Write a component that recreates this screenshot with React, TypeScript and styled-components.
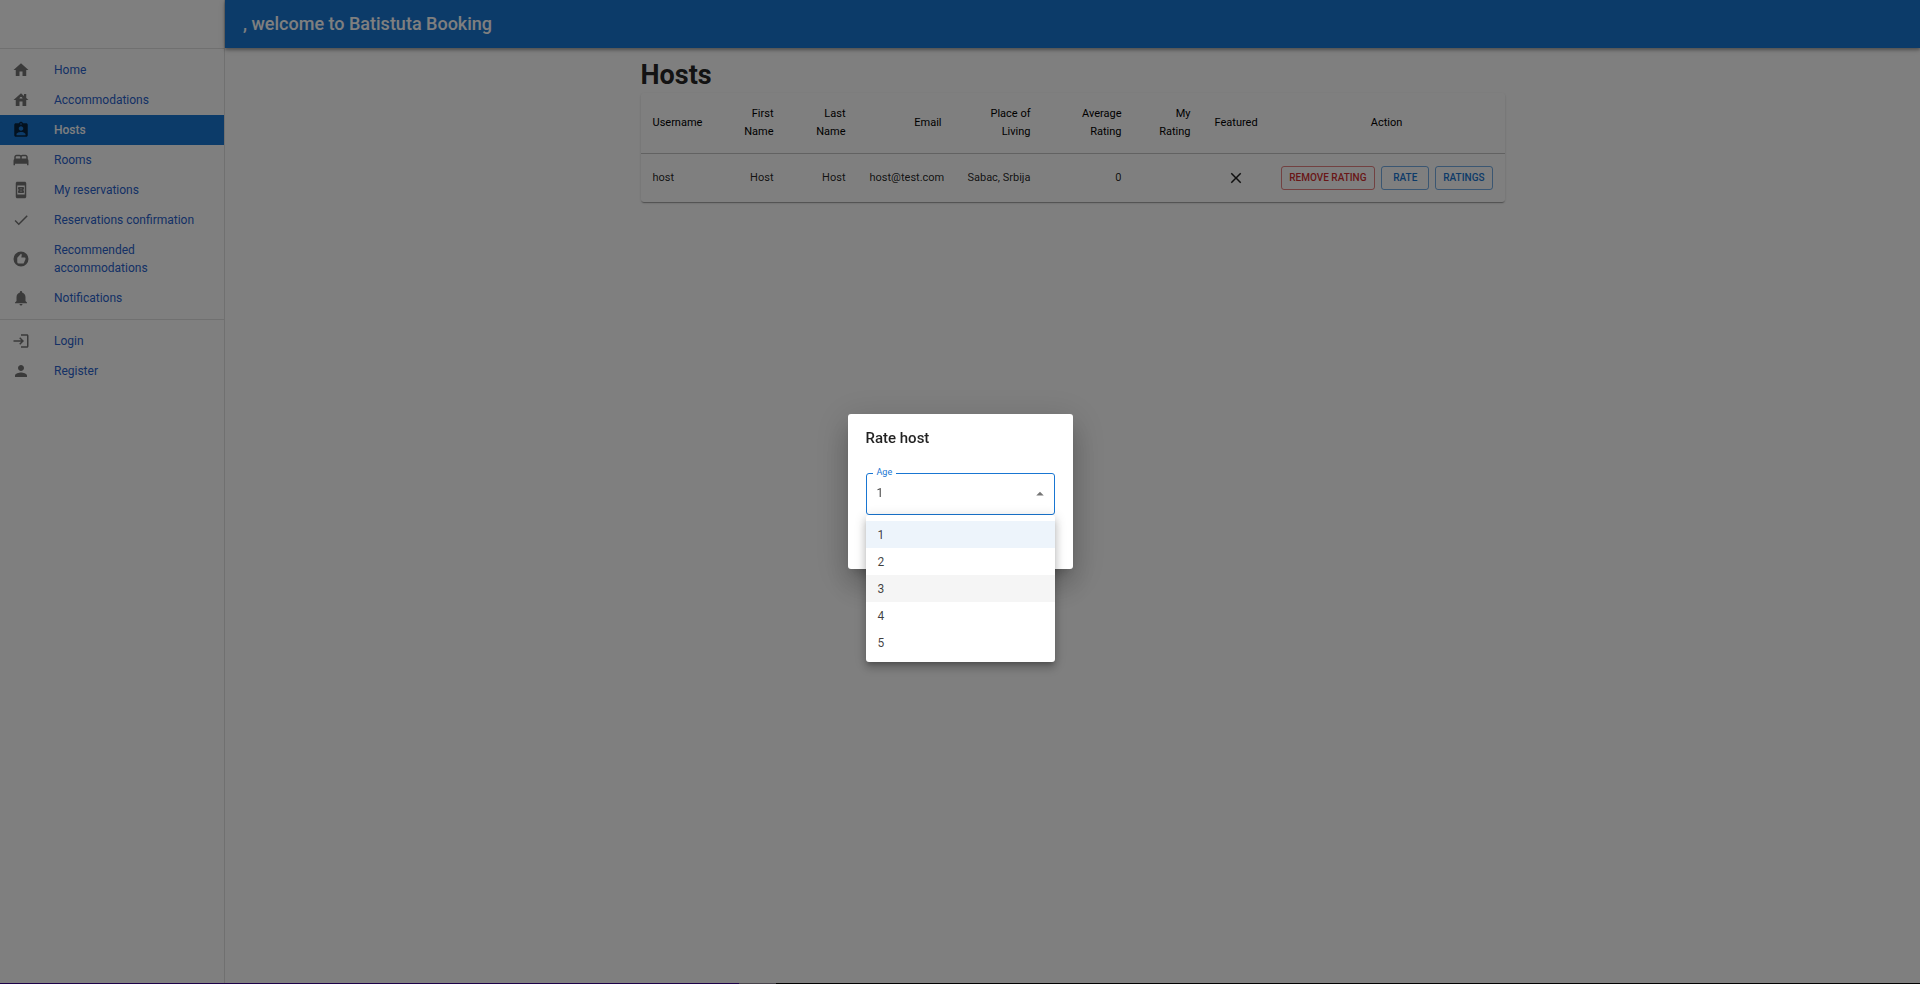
import React, { useState } from "react";
import styled, { createGlobalStyle } from "styled-components";
import {
  MdHome, MdHouse, MdAssignmentInd, MdBed, MdBookOnline, MdCheck, MdRecommend,
  MdNotifications, MdLogin, MdPerson, MdClose, MdArrowDropUp,
} from "react-icons/md";
import type { IconType } from "react-icons";

const GlobalStyle = createGlobalStyle`
  *, *::before, *::after { box-sizing: border-box; }
  body {
    margin: 0;
    background: #fff;
    color: rgba(0, 0, 0, 0.87);
    font-family: Roboto, "Liberation Sans", sans-serif;
    font-size: 12px;
    line-height: 18px;
  }
`;

const Shell = styled.div`
  display: grid;
  grid-template-columns: 225px 1fr;
  min-height: 100vh;
`;

const Sidebar = styled.aside`
  border-right: 1px solid rgba(0, 0, 0, 0.12);
`;

const SidebarTop = styled.div`
  height: 48px;
`;

const Divider = styled.hr`
  margin: 0;
  border: 0;
  border-top: 1px solid rgba(0, 0, 0, 0.12);
`;

const NavList = styled.ul`
  list-style: none;
  margin: 0;
  padding: 6px 0;
`;

const NavLink = styled.a<{ $active?: boolean }>`
  display: flex;
  align-items: center;
  padding: 6px 12px;
  text-decoration: none;
  color: ${(p) => (p.$active ? "#fff" : "#2a62cc")};
  background: ${(p) => (p.$active ? "#1976d2" : "transparent")};
  font-weight: ${(p) => (p.$active ? 500 : 400)};

  svg {
    flex: none;
    width: 18px;
    height: 18px;
    margin-right: 24px;
    color: ${(p) => (p.$active ? "rgba(0, 0, 0, 0.7)" : "rgba(0, 0, 0, 0.54)")};
  }
`;

const AppBar = styled.header`
  display: flex;
  align-items: center;
  height: 48px;
  padding: 0 18px;
  color: #fff;
  background: #1976d2;
  box-shadow: 0 2px 3px rgba(0, 0, 0, 0.3), 0 1px 8px rgba(0, 0, 0, 0.15);
  font-size: 18px;
  font-weight: 500;
`;

const Container = styled.main`
  max-width: 900px;
  margin: 0 auto;
  padding: 9px 18px;
`;

const PageTitle = styled.h1`
  margin: 0;
  font-size: 27px;
  line-height: 36px;
  font-weight: 700;
`;

const Card = styled.div`
  border-radius: 3px;
  box-shadow: 0 2px 1px -1px rgba(0, 0, 0, 0.2), 0 1px 1px rgba(0, 0, 0, 0.14), 0 1px 3px rgba(0, 0, 0, 0.12);
`;

const Table = styled.table`
  width: 100%;
  table-layout: fixed;
  border-collapse: collapse;
  font-size: 11px;
`;

type Align = "left" | "right" | "center";

const HeadCell = styled.th<{ $align: Align }>`
  padding: 12px;
  border-bottom: 1px solid rgba(0, 0, 0, 0.12);
  color: #000;
  font-weight: 400;
  text-align: ${(p) => p.$align};
`;

const Cell = styled.td<{ $align: Align }>`
  padding: 12px;
  text-align: ${(p) => p.$align};
  white-space: nowrap;

  svg {
    display: block;
    width: 18px;
    height: 18px;
    margin: 0 auto;
  }
`;

const Actions = styled.div`
  display: flex;
  gap: 6px;
`;

const OutlinedButton = styled.button<{ $danger?: boolean }>`
  flex: ${(p) => (p.$danger ? "1 1 auto" : "0 0 auto")};
  min-width: 48px;
  height: 24px;
  padding: 0 ${(p) => (p.$danger ? 6 : 7)}px;
  border: 1px solid ${(p) => (p.$danger ? "rgba(211, 47, 47, 0.6)" : "rgba(25, 118, 210, 0.6)")};
  border-radius: 3px;
  background: transparent;
  color: ${(p) => (p.$danger ? "#d32f2f" : "#1976d2")};
  font: 500 10px/18px Roboto, "Liberation Sans", sans-serif;
  text-transform: uppercase;
  cursor: pointer;
`;

const Backdrop = styled.div`
  position: fixed;
  inset: 0 0 1px;
  display: flex;
  align-items: center;
  justify-content: center;
  background: rgba(0, 0, 0, 0.5);
`;

const BottomEdge = styled.div`
  position: fixed;
  inset: auto 0 0;
  height: 1px;
  background: linear-gradient(to right, #1c0048 0 38.5%, #48444c 38.5% 40.4%, #000 40.4%);
`;

const Dialog = styled.section`
  width: 225px;
  border-radius: 3px;
  background: #fff;
  box-shadow: 0 8px 11px -5px rgba(0, 0, 0, 0.2), 0 18px 28px 2px rgba(0, 0, 0, 0.14), 0 7px 34px 6px rgba(0, 0, 0, 0.12);
`;

const DialogTitle = styled.h2`
  margin: 0;
  padding: 12px 18px;
  font-size: 15px;
  line-height: 24px;
  font-weight: 500;
`;

const DialogBody = styled.div`
  padding: 11px 18px 15px;
`;

const DialogActions = styled.div`
  display: flex;
  justify-content: flex-end;
  padding: 0 12px 9px;
`;

const TextButton = styled.button`
  height: 30px;
  padding: 0 6px;
  border: 0;
  background: transparent;
  color: #1976d2;
  font: 500 11px/18px Roboto, "Liberation Sans", sans-serif;
  text-transform: uppercase;
  cursor: pointer;
`;

const Field = styled.div`
  position: relative;

  svg {
    position: absolute;
    top: 12px;
    right: 6px;
    width: 18px;
    height: 18px;
    color: rgba(0, 0, 0, 0.54);
    pointer-events: none;
  }
`;

const FieldLabel = styled.label`
  position: absolute;
  top: -7px;
  left: 7px;
  padding: 0 4px;
  background: #fff;
  color: #1976d2;
  font-size: 9px;
  line-height: 12px;
`;

const Select = styled.select`
  display: block;
  width: 100%;
  height: 42px;
  padding: 0 24px 2px 10px;
  appearance: none;
  border: 1px solid #1976d2;
  border-radius: 3px;
  outline: none;
  background: transparent;
  color: rgba(0, 0, 0, 0.75);
  font: 400 12px/18px Roboto, "Liberation Sans", sans-serif;
`;

const Menu = styled.ul`
  position: absolute;
  z-index: 1;
  top: 100%;
  left: 0;
  right: 0;
  margin: 0;
  padding: 6px 0;
  list-style: none;
  border-radius: 3px;
  background: #fff;
  box-shadow: 0 4px 4px -2px rgba(0, 0, 0, 0.2), 0 6px 8px 1px rgba(0, 0, 0, 0.14), 0 2px 11px 2px rgba(0, 0, 0, 0.12);
`;

const MenuItem = styled.li<{ $selected: boolean; $hovered: boolean }>`
  padding: 5px 12px 4px;
  cursor: pointer;
  color: rgba(0, 0, 0, 0.75);
  background: ${(p) => (p.$selected ? "#edf4fb" : p.$hovered ? "#f5f5f5" : "#fff")};
`;

const mainLinks: { label: string; icon: IconType }[] = [
  { label: "Home", icon: MdHome },
  { label: "Accommodations", icon: MdHouse },
  { label: "Hosts", icon: MdAssignmentInd },
  { label: "Rooms", icon: MdBed },
  { label: "My reservations", icon: MdBookOnline },
  { label: "Reservations confirmation", icon: MdCheck },
  { label: "Recommended accommodations", icon: MdRecommend },
  { label: "Notifications", icon: MdNotifications },
];

const accountLinks: { label: string; icon: IconType }[] = [
  { label: "Login", icon: MdLogin },
  { label: "Register", icon: MdPerson },
];

const columns: { label: string; align: Align; width: number }[] = [
  { label: "Username", align: "left", width: 73 },
  { label: "First Name", align: "right", width: 72 },
  { label: "Last Name", align: "right", width: 72 },
  { label: "Email", align: "right", width: 96 },
  { label: "Place of Living", align: "right", width: 89 },
  { label: "Average Rating", align: "right", width: 91 },
  { label: "My Rating", align: "right", width: 69 },
  { label: "Featured", align: "center", width: 66 },
  { label: "Action", align: "center", width: 236 },
];

const Column = styled.col<{ $width: number }>`
  width: ${(p) => p.$width}px;
`;

const ratings = ["1", "2", "3", "4", "5"];

function NavGroup({ links }: { links: typeof mainLinks }) {
  return (
    <NavList>
      {links.map(({ label, icon: Icon }) => (
        <li key={label}>
          <NavLink href="#" $active={label === "Hosts"}>
            <Icon aria-hidden />
            {label}
          </NavLink>
        </li>
      ))}
    </NavList>
  );
}

function RateDialog() {
  const [rating, setRating] = useState("1");
  const [hovered, setHovered] = useState("3");
  return (
    <Backdrop>
      <Dialog role="dialog" aria-labelledby="rate-title">
        <DialogTitle id="rate-title">Rate host</DialogTitle>
        <DialogBody>
          <Field>
            <FieldLabel htmlFor="rating">Age</FieldLabel>
            <Select id="rating" value={rating} onChange={(e) => setRating(e.target.value)}>
              {ratings.map((r) => (
                <option key={r}>{r}</option>
              ))}
            </Select>
            <MdArrowDropUp aria-hidden />
            <Menu role="listbox" aria-label="Age">
              {ratings.map((r) => (
                <MenuItem
                  key={r}
                  role="option"
                  aria-selected={r === rating}
                  $selected={r === rating}
                  $hovered={r === hovered}
                  onMouseEnter={() => setHovered(r)}
                  onClick={() => setRating(r)}
                >
                  {r}
                </MenuItem>
              ))}
            </Menu>
          </Field>
        </DialogBody>
        <DialogActions>
          <TextButton type="button">Rate</TextButton>
        </DialogActions>
      </Dialog>
    </Backdrop>
  );
}

export default function App() {
  return (
    <>
      <GlobalStyle />
      <Shell>
        <Sidebar>
          <SidebarTop />
          <Divider />
          <nav>
            <NavGroup links={mainLinks} />
            <Divider />
            <NavGroup links={accountLinks} />
          </nav>
        </Sidebar>
        <div>
          <AppBar>, welcome to Batistuta Booking</AppBar>
          <Container>
            <PageTitle>Hosts</PageTitle>
            <Card>
              <Table>
                <colgroup>
                  {columns.map((c) => (
                    <Column key={c.label} $width={c.width} />
                  ))}
                </colgroup>
                <thead>
                  <tr>
                    {columns.map((c) => (
                      <HeadCell key={c.label} scope="col" $align={c.align}>{c.label}</HeadCell>
                    ))}
                  </tr>
                </thead>
                <tbody>
                  <tr>
                    <Cell $align="left">host</Cell>
                    <Cell $align="right">Host</Cell>
                    <Cell $align="right">Host</Cell>
                    <Cell $align="right">host@test.com</Cell>
                    <Cell $align="right">Sabac, Srbija</Cell>
                    <Cell $align="right">0</Cell>
                    <Cell $align="right" />
                    <Cell $align="center"><MdClose aria-label="Not featured" /></Cell>
                    <Cell $align="center">
                      <Actions>
                        <OutlinedButton type="button" $danger>Remove rating</OutlinedButton>
                        <OutlinedButton type="button">Rate</OutlinedButton>
                        <OutlinedButton type="button">Ratings</OutlinedButton>
                      </Actions>
                    </Cell>
                  </tr>
                </tbody>
              </Table>
            </Card>
          </Container>
        </div>
      </Shell>
      <RateDialog />
      <BottomEdge />
    </>
  );
}
